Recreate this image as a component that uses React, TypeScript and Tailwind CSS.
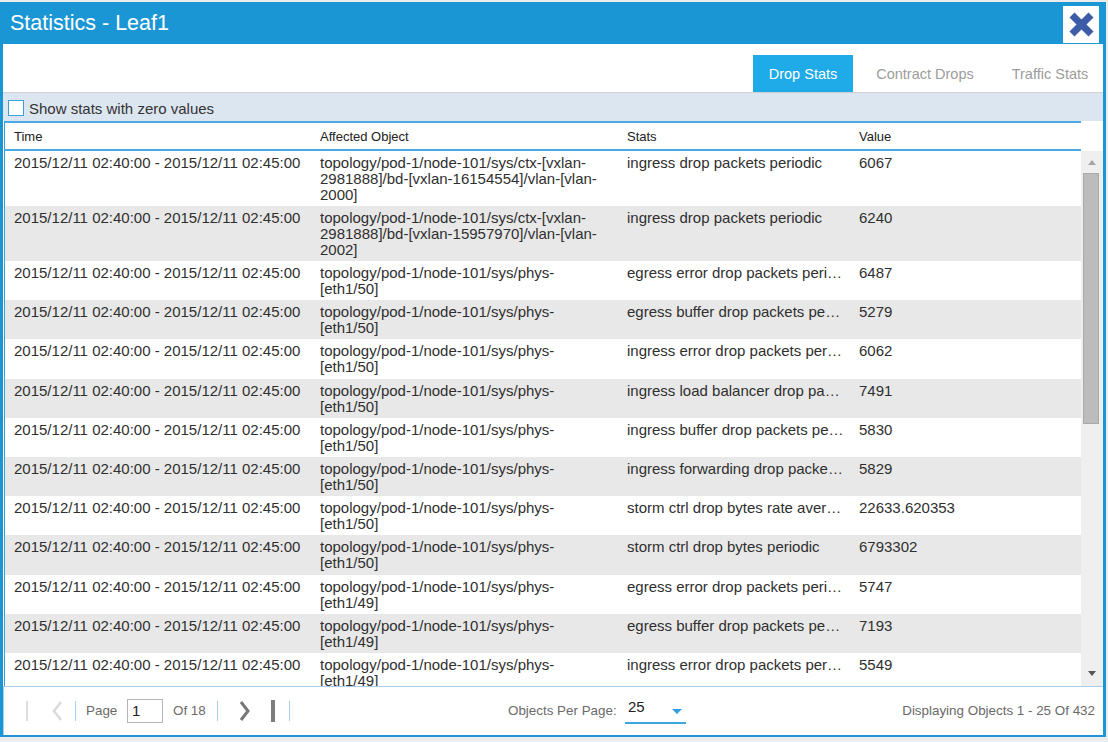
import React from "react";

type Row = { obj: string[]; stat: string; value: string };

const TIME = "2015/12/11 02:40:00 - 2015/12/11 02:45:00";
const P50 = ["topology/pod-1/node-101/sys/phys-", "[eth1/50]"];
const P49 = ["topology/pod-1/node-101/sys/phys-", "[eth1/49]"];

const rows: Row[] = [
  {
    obj: ["topology/pod-1/node-101/sys/ctx-[vxlan-", "2981888]/bd-[vxlan-16154554]/vlan-[vlan-", "2000]"],
    stat: "ingress drop packets periodic",
    value: "6067",
  },
  {
    obj: ["topology/pod-1/node-101/sys/ctx-[vxlan-", "2981888]/bd-[vxlan-15957970]/vlan-[vlan-", "2002]"],
    stat: "ingress drop packets periodic",
    value: "6240",
  },
  { obj: P50, stat: "egress error drop packets periodic", value: "6487" },
  { obj: P50, stat: "egress buffer drop packets periodic", value: "5279" },
  { obj: P50, stat: "ingress error drop packets periodic", value: "6062" },
  { obj: P50, stat: "ingress load balancer drop packets periodic", value: "7491" },
  { obj: P50, stat: "ingress buffer drop packets periodic", value: "5830" },
  { obj: P50, stat: "ingress forwarding drop packets periodic", value: "5829" },
  { obj: P50, stat: "storm ctrl drop bytes rate average", value: "22633.620353" },
  { obj: P50, stat: "storm ctrl drop bytes periodic", value: "6793302" },
  { obj: P49, stat: "egress error drop packets periodic", value: "5747" },
  { obj: P49, stat: "egress buffer drop packets periodic", value: "7193" },
  { obj: P49, stat: "ingress error drop packets periodic", value: "5549" },
  { obj: P49, stat: "ingress buffer drop packets periodic", value: "5512" },
];

function CloseX() {
  return (
    <svg width="25" height="25" viewBox="0 0 25 25">
      <line x1="3" y1="3" x2="22" y2="22" stroke="#3d5ba7" strokeWidth="7" />
      <line x1="22" y1="3" x2="3" y2="22" stroke="#3d5ba7" strokeWidth="7" />
    </svg>
  );
}

export default function App() {
  return (
    <div className="w-[1108px] h-[742px] bg-[#ececec] pt-[2px] font-['Liberation_Sans',Arial,sans-serif] overflow-hidden">
      <div className="w-[1106px] h-[735px] border-x-[3px] border-b-[2px] border-[#1b96d4] bg-white flex flex-col">
        {/* Title bar */}
        <div className="h-[42px] bg-[#1b96d4] flex items-start justify-between shrink-0">
          <div className="pl-[7px] h-[42px] flex items-center text-white text-[21.5px] leading-[24px]">
            Statistics - Leaf1
          </div>
          <div className="mt-[4px] mr-[4px] w-[36px] h-[37px] bg-white flex items-center justify-center">
            <CloseX />
          </div>
        </div>

        {/* Tabs */}
        <div className="h-[49px] border-b border-[#cfcfcf] flex items-end justify-end shrink-0">
          <div className="w-[100px] h-[37px] pt-[2px] bg-[#1faae8] text-white text-[14.5px] flex items-center justify-center">
            Drop Stats
          </div>
          <div className="w-[144px] h-[37px] pt-[2px] text-[#9c9c9c] text-[14.5px] flex items-center justify-center">
            Contract Drops
          </div>
          <div className="w-[106px] h-[37px] pt-[2px] text-[#9c9c9c] text-[14.5px] flex items-center justify-center">
            Traffic Stats
          </div>
        </div>

        {/* Checkbox bar */}
        <div className="h-[28px] bg-[#dce6f1] flex items-center pl-[5px] shrink-0">
          <div className="w-[16px] h-[16px] bg-white border-[1.5px] border-[#3b9fdc] mt-[2px]" />
          <span className="ml-[5px] mt-[3px] text-[15px] leading-[16px] text-[#333]">Show stats with zero values</span>
        </div>

        {/* Header */}
        <div className="flex h-[30px] shrink-0">
          <div className="ml-[1px] w-[1077px] border-l border-l-[#3aa0dc] border-t-2 border-b-2 border-[#4aaae2] flex items-center pt-[1px] text-[13px] text-[#222]">
            <div className="w-[307px] pl-[9px]">Time</div>
            <div className="w-[307px] pl-[8px]">Affected Object</div>
            <div className="w-[232px] pl-[8px]">Stats</div>
            <div className="w-[230px] pl-[8px]">Value</div>
          </div>
          <div className="flex-1 bg-white" />
        </div>

        {/* Body */}
        <div className="flex h-[535px] shrink-0">
          <div className="ml-[1px] w-[1077px] border-l border-[#3aa0dc] overflow-hidden">
            {rows.map((r, i) => (
              <div
                key={i}
                className={`flex pt-[4px] text-[15px] leading-[16px] text-[#2f2f2f] ${i < 2 ? "h-[55px]" : "h-[39.2px]"} ${i % 2 === 1 ? "bg-[#e8e8e8]" : "bg-white"}`}
              >
                <div className="w-[307px] pl-[9px] whitespace-nowrap shrink-0">{TIME}</div>
                <div className="w-[307px] pl-[8px] shrink-0">
                  {r.obj.map((l, j) => (
                    <div key={j} className="whitespace-nowrap">
                      {l}
                    </div>
                  ))}
                </div>
                <div className="w-[232px] pl-[8px] pr-[6px] shrink-0">
                  <div className="truncate">{r.stat}</div>
                </div>
                <div className="w-[230px] pl-[8px] shrink-0">{r.value}</div>
              </div>
            ))}
          </div>
          {/* Scrollbar */}
          <div className="flex-1 bg-[#efefef] flex flex-col items-center">
            <div className="h-[22px] flex items-center justify-center">
              <div className="w-0 h-0 border-l-[4px] border-r-[4px] border-b-[5px] border-l-transparent border-r-transparent border-b-[#a6a6a6] mt-[1px]" />
            </div>
            <div className="w-[16px] h-[251px] bg-[#bcbcbc] border border-[#a9a9a9] -ml-[2px]" />
            <div className="flex-1" />
            <div className="h-[22px] flex items-center justify-center">
              <div className="w-0 h-0 border-l-[4px] border-r-[4px] border-t-[5px] border-l-transparent border-r-transparent border-t-[#555] mb-[3px]" />
            </div>
          </div>
        </div>

        {/* Footer */}
        <div className="h-[49px] border-t border-l border-[#a9cdea] flex items-center text-[13.4px] text-[#6a6a6a] shrink-0">
          <div className="ml-[22px] w-[2px] h-[20px] bg-[#dedede]" />
          <svg className="ml-[23px]" width="12" height="20" viewBox="0 0 12 20">
            <path d="M10 1 L3 10 L10 19" fill="none" stroke="#dadada" strokeWidth="2.5" />
          </svg>
          <div className="ml-[12px] w-[1px] h-[20px] bg-[#a9d0ef]" />
          <span className="ml-[10px] w-[41px]">Page</span>
          <div className="w-[36px] h-[24px] border border-[#b5b5b5] flex items-center pl-[4px] text-[15px] text-[#222]">1</div>
          <span className="ml-[10px] w-[44px]">Of 18</span>
          <div className="w-[1px] h-[20px] bg-[#a9d0ef]" />
          <svg className="ml-[21px]" width="12" height="20" viewBox="0 0 12 20">
            <path d="M2 1 L9 10 L2 19" fill="none" stroke="#777" strokeWidth="3" />
          </svg>
          <div className="ml-[20px] w-[4px] h-[22px] bg-[#7d7d7d]" />
          <div className="ml-[14px] w-[1px] h-[20px] bg-[#a9d0ef]" />
          <span className="ml-[218px] w-[117px]">Objects Per Page:</span>
          <div className="w-[61px] h-[26px] border-b-2 border-[#3ea6e0] flex items-start relative">
            <span className="pl-[3px] text-[15px] text-[#222] leading-[18px]">25</span>
            <div className="absolute left-[47px] top-[11px] w-0 h-0 border-l-[5px] border-r-[5px] border-t-[5px] border-l-transparent border-r-transparent border-t-[#2f9fe0]" />
          </div>
          <span className="ml-auto mr-[8px]">Displaying Objects 1 - 25 Of 432</span>
        </div>
      </div>
    </div>
  );
}
